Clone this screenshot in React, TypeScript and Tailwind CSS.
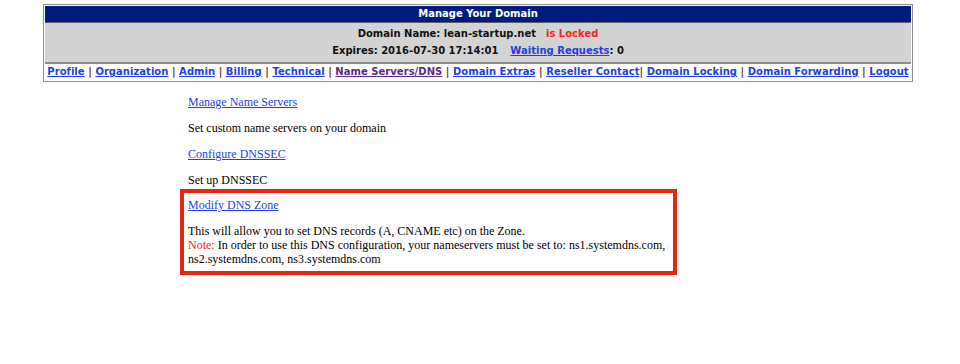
const NAV = [
  { label: 'Profile' },
  { label: 'Organization' },
  { label: 'Admin' },
  { label: 'Billing' },
  { label: 'Technical' },
  { label: 'Name Servers/DNS', visited: true },
  { label: 'Domain Extras' },
  { label: 'Reseller Contact', tight: true },
  { label: 'Domain Locking' },
  { label: 'Domain Forwarding' },
  { label: 'Logout' },
];

function Sep({ tight }: { tight?: boolean }) {
  return <span className="text-[#5a3a1a]">{tight ? '| ' : ' | '}</span>;
}

export default function App() {
  return (
    <div className="min-h-[364px] w-[960px] bg-white pt-[4px]">
      {/* domain header table */}
      <div
        className="ml-[43px] w-[870px] border border-[#8c8c8c] p-px text-[10px] font-bold leading-none"
        style={{ fontFamily: '"DejaVu Sans", Verdana, sans-serif' }}
      >
        <div className="flex h-[16px] items-center justify-center bg-[#021b7c] text-white">Manage Your Domain</div>
        <div className="border-t border-[#5f5f5f]" />
        <div className="flex h-[39px] flex-col items-center justify-center gap-[7px] bg-[#d3d3d3] text-[#111]">
          <div>
            Domain Name: lean-startup.net<span className="ml-[10px] text-[#fe2020]">is Locked</span>
          </div>
          <div>
            Expires: 2016-07-30 17:14:01
            <a href="#" className="ml-[12px] text-[#1f3fe0] underline">Waiting Requests</a>: 0
          </div>
        </div>
        <div className="border-t-2 border-[#8c8c8c]" />
        <div className="flex h-[16px] items-center justify-center whitespace-pre tracking-[0.03px]">
          {NAV.map((n, i) => (
            <span key={n.label}>
              {i > 0 && <Sep tight={NAV[i - 1].tight} />}
              <a href="#" className={`underline ${n.visited ? 'text-[#5b2a86]' : 'text-[#1f3fe0]'}`}>{n.label}</a>
            </span>
          ))}
        </div>
      </div>

      {/* name server options */}
      <div
        className="ml-[180px] mt-[13px] flex w-[497px] flex-col text-[12px] leading-[14px] text-black"
        style={{ fontFamily: '"Liberation Serif", "Times New Roman", serif' }}
      >
        <div className="pl-[8px]">
          <a href="#" className="text-[#1f3fe0] underline">Manage Name Servers</a>
        </div>
        <div className="mt-[12px] pl-[8px]">Set custom name servers on your domain</div>
        <div className="mt-[12px] pl-[8px]">
          <a href="#" className="text-[#1f3fe0] underline">Configure DNSSEC</a>
        </div>
        <div className="mt-[12px] pl-[8px]">Set up DNSSEC</div>
        <div className="mt-[2px] border-4 border-[#e6270f] pb-[5px] pl-[4px] pt-[5px]">
          <a href="#" className="text-[#1f3fe0] underline">Modify DNS Zone</a>
          <div className="mt-[12px] whitespace-nowrap">
            This will allow you to set DNS records (A, CNAME etc) on the Zone.
            <br />
            <span className="text-[#f01c1c]">Note:</span> In order to use this DNS configuration, your nameservers must be set to: ns1.systemdns.com,
            <br />
            ns2.systemdns.com, ns3.systemdns.com
          </div>
        </div>
      </div>
    </div>
  );
}
